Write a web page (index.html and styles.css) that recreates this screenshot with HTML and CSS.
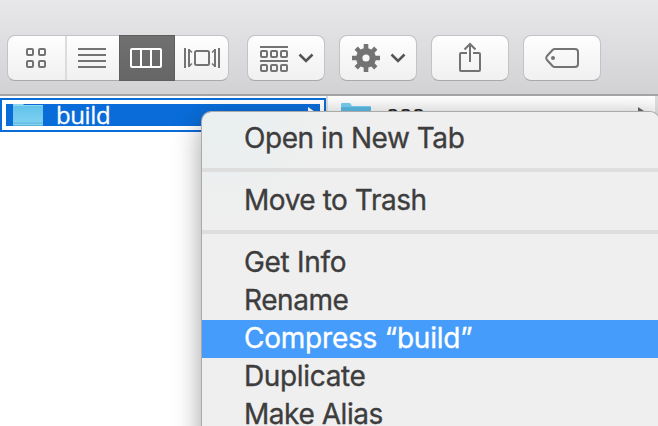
FILE: index.html
```html
<!DOCTYPE html>
<html lang="en">
<head>
<meta charset="utf-8">
<title>Finder</title>
<link rel="stylesheet" href="styles.css">
</head>
<body>
<div class="window">
  <header class="toolbar">
    <div class="segments">
      <div class="segment icons">
        <svg width="20" height="20" viewBox="0 0 20 20" fill="none" stroke="#737373" stroke-width="2"><rect x="1" y="1" width="6" height="6" rx="1"/><rect x="13" y="1" width="6" height="6" rx="1"/><rect x="1" y="13" width="6" height="6" rx="1"/><rect x="13" y="13" width="6" height="6" rx="1"/></svg>
      </div>
      <div class="segment list">
        <svg width="28" height="20" viewBox="0 0 28 20" stroke="#737373" stroke-width="2"><path d="M0 1H28M0 7H28M0 13H28M0 19H28"/></svg>
      </div>
      <div class="segment columns-view">
        <svg width="32" height="20" viewBox="0 0 32 20" fill="none" stroke="#fff" stroke-width="2"><rect x="1" y="1" width="30" height="18" rx="1"/><path d="M11 1V19M21 1V19"/></svg>
      </div>
      <div class="segment flow">
        <svg width="36" height="20" viewBox="0 0 36 20" fill="none" stroke="#737373" stroke-width="2"><path d="M1 0V20M35 0V20"/><path d="M5 1V19M31 1V19"/><path d="M5 1.500L8 4.500M5 18.500L8 15.500M31 1.500L28 4.500M31 18.500L28 15.500" stroke-width="1.500"/><rect x="11" y="3" width="14" height="14" rx="1.500"/></svg>
      </div>
    </div>
    <div class="button arrange">
      <svg width="28" height="26" viewBox="0 0 28 26" fill="none" stroke="#737373" stroke-width="2"><path d="M0 1H28M0 15H28"/><rect x="1" y="5" width="6" height="6" rx="1"/><rect x="11" y="5" width="6" height="6" rx="1"/><rect x="21" y="5" width="6" height="6" rx="1"/><rect x="1" y="19" width="6" height="6" rx="1"/><rect x="11" y="19" width="6" height="6" rx="1"/><rect x="21" y="19" width="6" height="6" rx="1"/></svg>
      <svg class="chevron" width="16" height="10" viewBox="0 0 16 10" fill="none" stroke="#555" stroke-width="2.600"><path d="M1.500 1.500L8 8L14.500 1.500"/></svg>
    </div>
    <div class="button action">
      <svg width="28" height="28" viewBox="-14 -14 28 28"><g fill="none" stroke="#737373"><circle r="6.800" stroke-width="6.400"/><path stroke-width="4.600" d="M0 -8V-14M0 8V14M-8 0H-14M8 0H14M-5.700 -5.700L-9.800 -9.800M5.700 -5.700L9.800 -9.800M-5.700 5.700L-9.800 9.800M5.700 5.700L9.800 9.800"/></g></svg>
      <svg class="chevron" width="16" height="10" viewBox="0 0 16 10" fill="none" stroke="#555" stroke-width="2.600"><path d="M1.500 1.500L8 8L14.500 1.500"/></svg>
    </div>
    <div class="button share">
      <svg width="22" height="30" viewBox="0 0 22 30" fill="none" stroke="#737373" stroke-width="2"><path d="M8 11H2Q1 11 1 12V28Q1 29 2 29H20Q21 29 21 28V12Q21 11 20 11H14M11 20V2M5.500 7.500L11 2L16.500 7.500"/></svg>
    </div>
    <div class="button tag">
      <svg width="34" height="20" viewBox="0 0 34 20"><path d="M10 1H30Q33 1 33 4V16Q33 19 30 19H10Q8.500 19 7.500 18L2 12Q.5 10 2 8L7.500 2Q8.500 1 10 1Z" fill="none" stroke="#737373" stroke-width="2"/><circle cx="8" cy="10" r="2" fill="#737373"/></svg>
    </div>
  </header>
  <main class="browser">
    <section class="column first">
      <div class="row selected">
        <svg class="folder" width="30" height="22" viewBox="0 0 30 22"><defs><linearGradient id="front" x2="0" y2="1"><stop stop-color="#62c3ea"/><stop offset="1" stop-color="#82d3f3"/></linearGradient></defs><path d="M0 0H10L11 1H30V22H0Z" fill="#8ad6f2"/><path d="M0 2H30V22H0Z" fill="url(#front)"/><path d="M0 19H30M0 21.500H30" stroke="#5bb4d8"/></svg>
        <span class="name">build</span>
        <svg class="arrow" width="10" height="16" viewBox="0 0 10 16"><path d="M0 0L10 7L10 9L0 16Z" fill="#fff"/></svg>
      </div>
    </section>
    <section class="column second">
      <div class="row">
        <svg class="folder" width="30" height="24" viewBox="0 0 30 24"><path d="M0 1Q0 0 1 0H9L11 3H29Q30 3 30 4V24H0Z" fill="#75ccee"/><path d="M0 5.500H30V24H0Z" fill="#5bb8e2"/><path d="M0 5H30" stroke="#48a8d2"/></svg>
        <span class="name">aaa</span>
        <svg class="arrow" width="12" height="16" viewBox="0 0 12 16"><path d="M0 0L12 8L0 16Z" fill="#666"/></svg>
      </div>
    </section>
  </main>
  <nav class="menu">
    <div class="item open">Open in New Tab</div>
    <div class="separator"></div>
    <div class="item trash">Move to Trash</div>
    <div class="separator"></div>
    <div class="item info">Get Info</div>
    <div class="item rename">Rename</div>
    <div class="item compress highlighted">Compress “build”</div>
    <div class="item duplicate">Duplicate</div>
    <div class="item alias">Make Alias</div>
  </nav>
</div>
</body>
</html>
```

FILE: styles.css
```css
* { box-sizing: border-box; }
body { margin: 0; overflow: hidden; background: #fff; }
svg { display: block; flex: none; }
.window { position: relative; width: 658px; height: 426px; overflow: hidden; }
.toolbar {
  display: flex;
  height: 96px;
  padding: 35px 7px 0;
  background: linear-gradient(#e8e7e9, #d2d1d3);
  border-bottom: 2px solid #a5a5a5;
}
.segments, .button {
  display: flex;
  height: 46px;
  border: 1px solid #c3c2c4;
  border-bottom-color: #a9a9a9;
  border-radius: 8px;
  background: linear-gradient(#fefefe, #f0f0f0);
}
.segments { width: 222px; margin-right: 18px; }
.segment { display: flex; align-items: center; justify-content: center; }
.icons { width: 59px; padding-right: 1px; border-right: 2px solid #dcdcdc; }
.list { width: 52px; padding-right: 2px; }
.columns-view { width: 56px; height: 46px; margin-top: -1px; padding-right: 2px; background: linear-gradient(#707070, #666); border: 1px solid #5e5e5e; }
.flow { width: 53px; }
.button { width: 78px; margin-right: 14px; align-items: center; justify-content: center; }
.arrange, .action { justify-content: flex-start; padding-left: 12px; }
.arrange > :first-child { margin-top: 2px; }
.chevron { margin-left: 10px; }
.share svg { margin-top: -2px; }
.browser { display: flex; height: 330px; }
.column { padding-top: 2px; }
.first { width: 328px; border-right: 2px solid #dcdcdc; }
.second { width: 330px; border-right: 3px solid #dcdcdc; background: linear-gradient(#fff, #f0f0f0 20px); }
.row { display: flex; height: 34px; align-items: center; }
.selected {
  border: 2px solid #0a6cd8;
  padding: 0 6px 0 11px;
  background: linear-gradient(#0a6cd8, #0a6cd8) 4px 4px / 314px 22px no-repeat #fff;
}
.name { flex: 1; margin-left: 13px; font: 24px/30px "Open Sans", sans-serif; letter-spacing: -.4px; color: #222; }
.selected .name { color: #fff; -webkit-text-stroke: .3px #fff; }
.second .row { padding: 0 5px 0 13px; }
.second .name { margin: -5px 0 0 15px; }
.menu {
  position: absolute;
  left: 202px;
  top: 112px;
  width: 457px;
  height: 340px;
  padding-top: 8px;
  border-radius: 9px;
  background: radial-gradient(circle at 20px 0, #e9eff0, #efefef 110px);
  box-shadow: 0 0 0 1px #aaa, 0 10px 28px rgba(0, 0, 0, .4);
}
.item {
  height: 38px;
  padding-left: 42px;
  font: 28px/37px Inter, sans-serif;
  color: #3d3d3d;
  white-space: nowrap;
  letter-spacing: -.45px;
  -webkit-text-stroke: .35px currentColor;
}
.info { letter-spacing: -.3px; }
.compress { letter-spacing: -.22px; }
.duplicate { letter-spacing: -.35px; }
.highlighted { background: #459cfb; color: #fff; }
.separator { height: 4px; margin: 10px 0; background: #dedede; }
```
